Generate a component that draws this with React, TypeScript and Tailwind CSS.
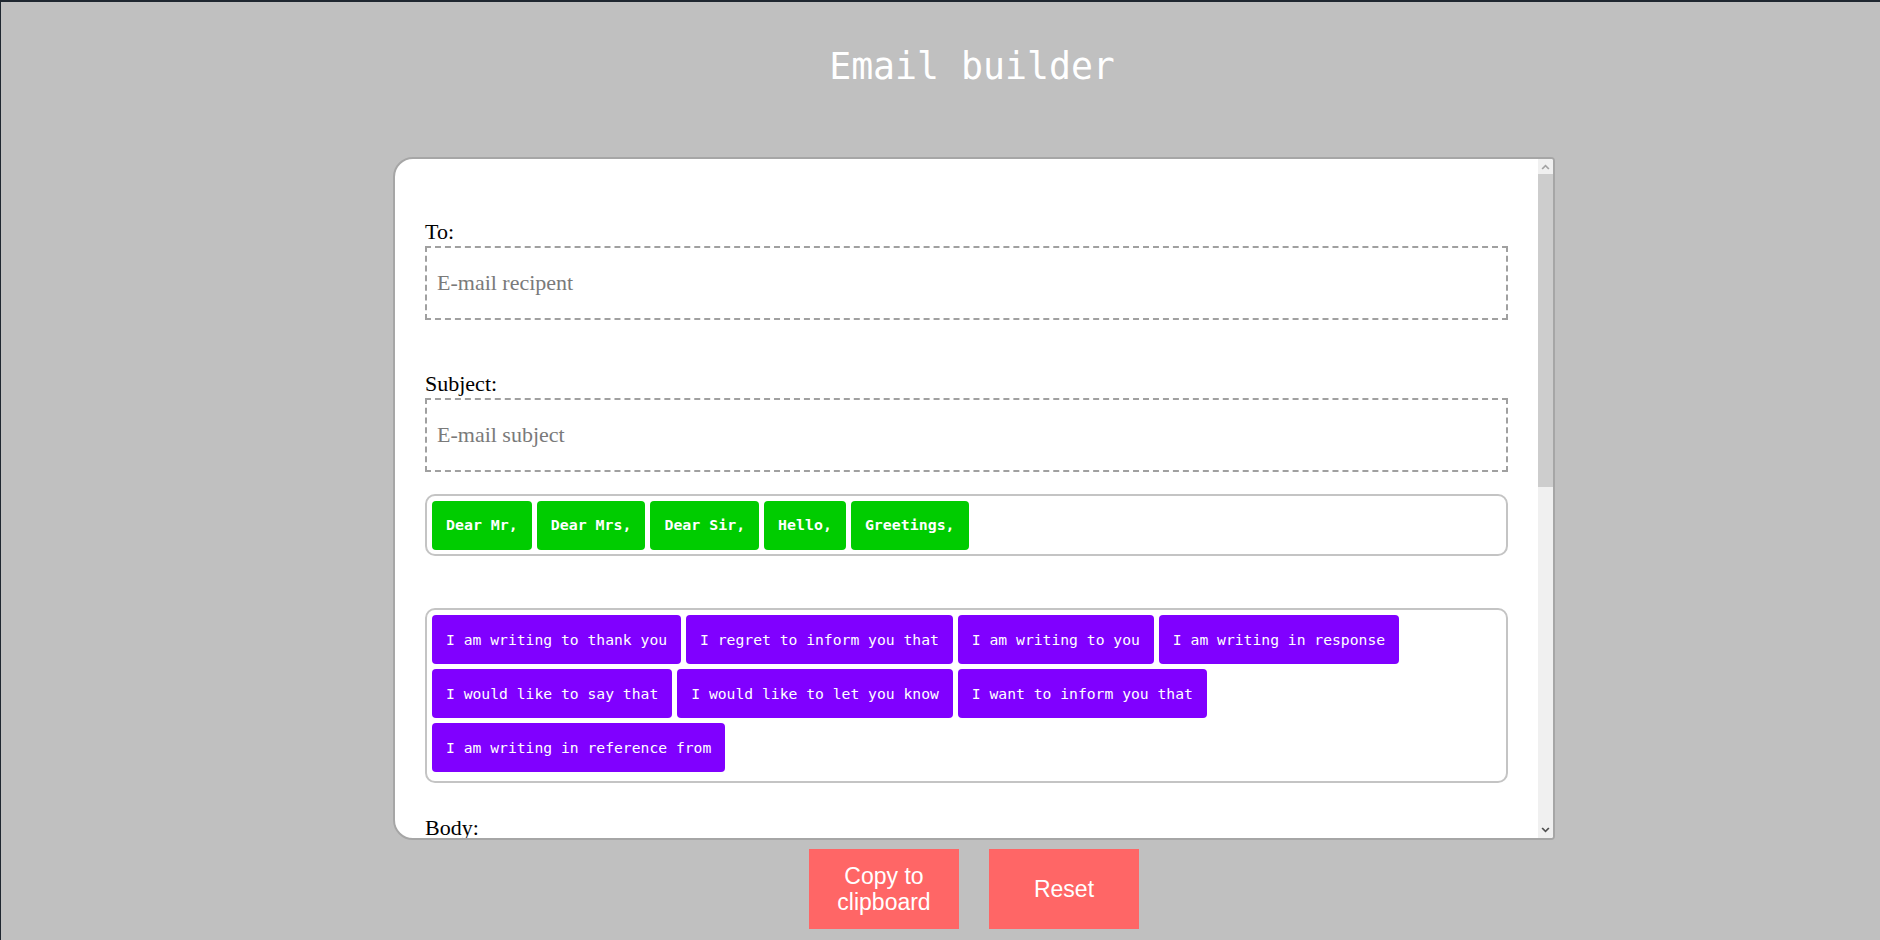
import React from "react";

const GREETINGS = ["Dear Mr,", "Dear Mrs,", "Dear Sir,", "Hello,", "Greetings,"];

const OPENERS = [
  "I am writing to thank you",
  "I regret to inform you that",
  "I am writing to you",
  "I am writing in response",
  "I would like to say that",
  "I would like to let you know",
  "I want to inform you that",
  "I am writing in reference from",
];

const mono = "font-['DejaVu_Sans_Mono',monospace]";
const serif = "font-['Liberation_Serif',serif]";

const Chip = ({ label, green }: { label: string; green?: boolean }) => {
  return (
    <button
      className={`h-[49px] px-[14px] rounded-[4px] text-white leading-[17px] whitespace-pre ${mono} ${
        green ? "bg-[#00cc00] font-bold text-[14.9px]" : "bg-[#8000ff] text-[14.7px]"
      }`}
    >
      {label}
    </button>
  );
};

const Field = ({ label, placeholder }: { label: string; placeholder: string }) => {
  return (
    <div>
      <label className={`block text-[22px] leading-[25px] text-black ${serif}`}>{label}</label>
      <input
        placeholder={placeholder}
        className={`mt-[2px] block w-full h-[74px] border-2 border-dashed border-[#a0a0a0] pl-[10px] text-[22px] outline-none placeholder:text-[#7a7a7a] ${serif}`}
      />
    </div>
  );
};

const Chevron = ({ down, color }: { down?: boolean; color: string }) => {
  return (
    <svg width="15" height="15" viewBox="0 0 15 15">
      <path
        d={down ? "M3.5 5.5 L7.5 9.5 L11.5 5.5 L10.2 4.5 L7.5 7.2 L4.8 4.5 Z" : "M3.5 9.5 L7.5 5.5 L11.5 9.5 L10.2 10.5 L7.5 7.8 L4.8 10.5 Z"}
        fill={color}
      />
    </svg>
  );
};

export default function App() {
  return (
    <div className="h-[940px] overflow-hidden bg-[#c0c0c0] border-t-2 border-l border-[#1f2730] pl-[67px] flex flex-col items-center">
      <div className="h-[155px] pt-[43px] pr-[4px]">
        <h1 className={`text-[36.5px] leading-[43px] text-white ${mono}`}>Email builder</h1>
      </div>

      <div className="w-[1162px] h-[683px] flex bg-white border-2 border-[#a6a6a6] rounded-l-[20px] rounded-r-[4px] overflow-hidden">
        <div className="flex-1 overflow-hidden px-[30px] pt-[60px]">
          <Field label="To:" placeholder="E-mail recipent" />
          <div className="mt-[51px]">
            <Field label="Subject:" placeholder="E-mail subject" />
          </div>

          <div className="mt-[22px] flex flex-wrap gap-[5px] border-2 border-[#c4c4c4] rounded-[10px] px-[5px] pt-[5px] pb-[4px]">
            {GREETINGS.map((g) => (
              <Chip key={g} label={g} green />
            ))}
          </div>

          <div className="mt-[52px] flex flex-wrap gap-[5px] border-2 border-[#c4c4c4] rounded-[10px] pl-[5px] pr-[14px] pt-[5px] pb-[9px]">
            {OPENERS.map((o) => (
              <Chip key={o} label={o} />
            ))}
          </div>

          <div className="mt-[32px]">
            <label className={`block text-[22px] leading-[25px] text-black ${serif}`}>Body:</label>
            <textarea className="mt-[2px] block w-full h-[240px] border-2 border-dashed border-[#a0a0a0] resize-none" />
          </div>
        </div>

        {/* fake scrollbar */}
        <div className="w-[15px] flex flex-col bg-[#f0f0f0]">
          <Chevron color="#a3a3a3" />
          <div className="h-[313px] bg-[#cdcdcd]" />
          <div className="flex-1" />
          <Chevron down color="#505050" />
        </div>
      </div>

      <div className="mt-[9px] flex gap-[30px]">
        <button className="w-[150px] h-[80px] bg-[#ff6666] text-white text-[23px] leading-[26px] font-['Liberation_Sans',Arial,sans-serif]">
          Copy to
          <br />
          clipboard
        </button>
        <button className="w-[150px] h-[80px] bg-[#ff6666] text-white text-[23px] leading-[26px] font-['Liberation_Sans',Arial,sans-serif]">
          Reset
        </button>
      </div>
    </div>
  );
}
